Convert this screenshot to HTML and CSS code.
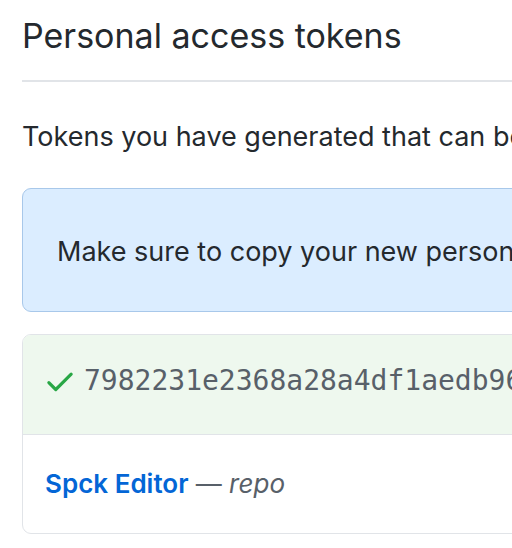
FILE: index.html
```html
<!DOCTYPE html>
<html>
<head>
<meta charset="utf-8">
<link rel="stylesheet" href="styles.css">
</head>
<body>
<div class="page">
  <h2 class="subhead">Personal access tokens</h2>
  <p class="intro">Tokens you have generated that can be used to access the GitHub API.</p>
  <div class="flash">Make sure to copy your new personal access token now. You won’t be able to see it again!</div>
  <div class="box">
    <div class="box-head">
      <svg class="check" viewBox="0 0 16 16" width="34" height="34"><path fill="#28a745" d="M13.78 4.22a.75.75 0 010 1.06l-7.25 7.25a.75.75 0 01-1.06 0L2.22 9.28a.75.75 0 011.06-1.06L6 10.94l6.72-6.72a.75.75 0 011.06 0z"/></svg>
      <code class="token">7982231e2368a28a4df1aedb96c4f3b1a0e5d772</code>
    </div>
    <div class="box-row">
      <a class="token-name" href="#">Spck Editor</a> <span class="scope">— <em>repo</em></span>
    </div>
  </div>
</div>
</body>
</html>
```
FILE: styles.css
```css
html, body {
  margin: 0;
  padding: 0;
  background: #fff;
  overflow: hidden;
}
body {
  font-family: Inter, "Liberation Sans", Arial, sans-serif;
  color: #24292e;
}
.page {
  width: 1100px;
  padding-left: 22px;
}
.subhead {
  margin: 0;
  padding-top: 16px;
  padding-bottom: 24px;
  font-size: 34px;
  line-height: 40px;
  font-weight: 400;
  border-bottom: 2px solid #e1e4e8;
}
.intro {
  margin: 34px 0 0;
  font-size: 27px;
  line-height: 42px;
  white-space: nowrap;
}
.flash {
  margin-top: 30px;
  padding: 42px 34px 38px;
  font-size: 27px;
  line-height: 42px;
  white-space: nowrap;
  background: #dbedff;
  border: 1px solid #a8c8ea;
  border-radius: 9px;
}
.box {
  margin-top: 22px;
  border: 1px solid #e1e4e8;
  border-radius: 9px;
  overflow: hidden;
}
.box-head {
  display: flex;
  align-items: center;
  gap: 7px;
  padding: 25px 20px 32px;
  background: #eef8ee;
  border-bottom: 1px solid #e1e4e8;
}
.check {
  flex: none;
}
.token {
  font-family: "DejaVu Sans Mono", monospace;
  font-size: 28px;
  line-height: 42px;
  color: #586069;
  white-space: nowrap;
}
.box-row {
  padding: 28px 22px;
  font-size: 26px;
  line-height: 42px;
  white-space: nowrap;
}
.token-name {
  color: #0366d6;
  font-weight: 600;
  text-decoration: none;
}
.scope {
  color: #586069;
}
```
